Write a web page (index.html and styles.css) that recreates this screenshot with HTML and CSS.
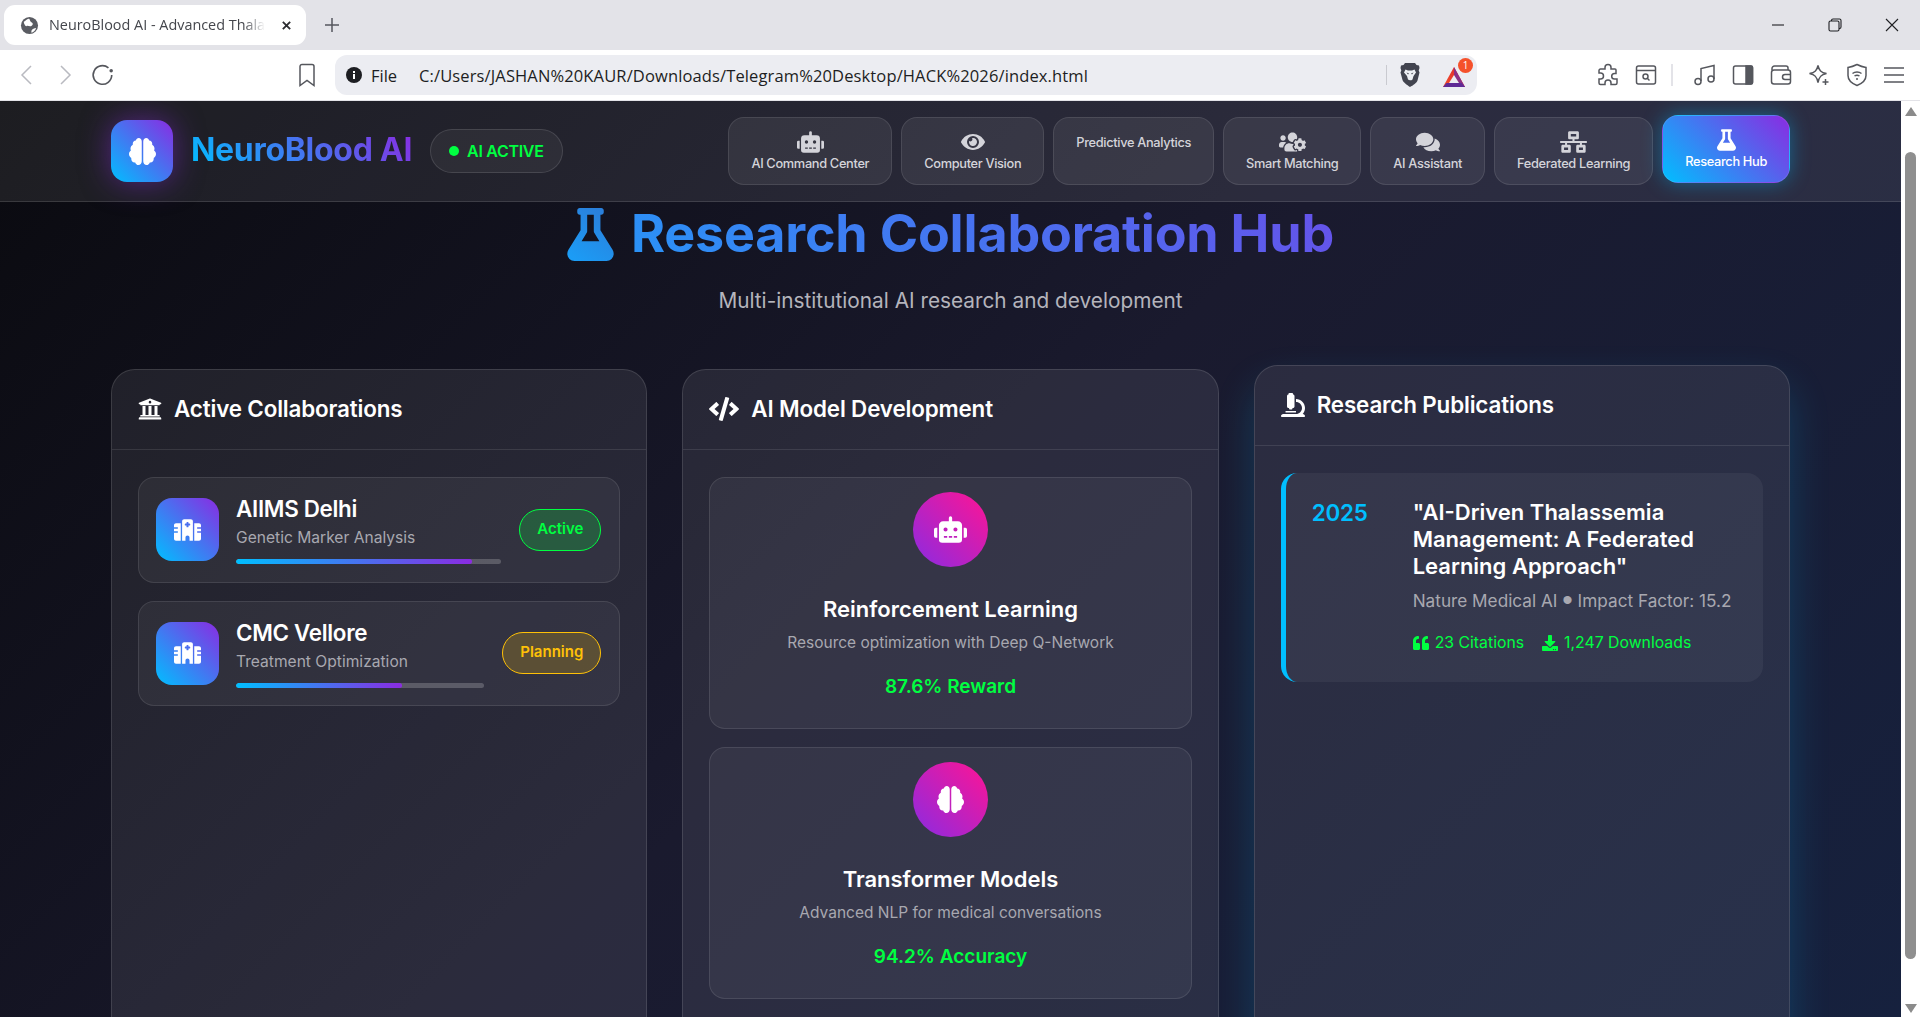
FILE: index.html
```html
<!DOCTYPE html>
<html lang="en">
<head>
    <meta charset="UTF-8">
    <meta name="viewport" content="width=device-width, initial-scale=1.0">
    <title>NeuroBlood AI - Advanced Thalassemia Care</title>
    <link rel="stylesheet" href="styles.css">
</head>

<body>
    <svg class="sprite" xmlns="http://www.w3.org/2000/svg">
        <symbol id="i-brain" viewBox="0 0 576 512" preserveAspectRatio="none"><path d="M208 0c-29.9 0-54.7 20.5-61.8 48.2-.8 0-1.4-.2-2.2-.2-35.3 0-64 28.7-64 64 0 4.8.6 9.5 1.7 14C52.5 138 32 166.6 32 200c0 12.6 3.2 24.3 8.3 34.9C16.3 248.7 0 274.3 0 304c0 33.3 20.4 61.9 49.4 73.9-.9 4.6-1.4 9.3-1.4 14.1 0 39.8 32.2 72 72 72 4.1 0 8.1-.5 12-1.2 9.6 28.5 36.2 49.2 68 49.2 39.8 0 72-32.2 72-72V64c0-35.3-28.7-64-64-64zm368 304c0-29.7-16.3-55.3-40.3-69.1 5.2-10.6 8.3-22.3 8.3-34.9 0-33.4-20.5-62-49.7-74 1-4.5 1.7-9.2 1.7-14 0-35.3-28.7-64-64-64-.8 0-1.5.2-2.2.2C422.7 20.5 397.9 0 368 0c-35.3 0-64 28.6-64 64v376c0 39.8 32.2 72 72 72 31.8 0 58.4-20.7 68-49.2 3.9.7 7.9 1.2 12 1.2 39.8 0 72-32.2 72-72 0-4.8-.5-9.5-1.4-14.1 29-12 49.4-40.6 49.4-73.9z"/></symbol>
        <symbol id="i-robot" viewBox="0 0 640 512"><path d="M32,224H64V416H32A31.96166,31.96166,0,0,1,0,384V256A31.96166,31.96166,0,0,1,32,224Zm512-48V448a64.06328,64.06328,0,0,1-64,64H160a64.06328,64.06328,0,0,1-64-64V176a79.974,79.974,0,0,1,80-80H288V32a32,32,0,0,1,64,0V96H464A79.974,79.974,0,0,1,544,176ZM264,256a40,40,0,1,0-40,40A39.997,39.997,0,0,0,264,256Zm-8,128H192v32h64Zm96,0H288v32h64ZM456,256a40,40,0,1,0-40,40A39.997,39.997,0,0,0,456,256Zm-8,128H384v32h64ZM640,256V384a31.96166,31.96166,0,0,1-32,32H576V224h32A31.96166,31.96166,0,0,1,640,256Z"/></symbol>
        <symbol id="i-eye" viewBox="0 0 576 512"><path d="M572.52 241.4C518.29 135.59 410.93 64 288 64S57.68 135.64 3.48 241.41a32.35 32.35 0 0 0 0 29.19C57.71 376.41 165.07 448 288 448s230.32-71.64 284.52-177.41a32.35 32.35 0 0 0 0-29.19zM288 400a144 144 0 1 1 144-144 143.93 143.93 0 0 1-144 144zm0-240a95.31 95.31 0 0 0-25.31 3.79 47.85 47.85 0 0 1-66.9 66.9A95.78 95.78 0 1 0 288 160z"/></symbol>
        <symbol id="i-users" viewBox="0 0 640 512"><path d="M610.5 341.3c2.6-14.1 2.6-28.5 0-42.6l25.8-14.9c3-1.7 4.3-5.2 3.3-8.5-6.7-21.6-18.2-41.2-33.2-57.4-2.3-2.5-6-3.1-9-1.4l-25.8 14.9c-10.9-9.3-23.4-16.5-36.9-21.3v-29.8c0-3.4-2.4-6.4-5.7-7.1-22.3-5-45-4.8-66.2 0-3.3.7-5.7 3.7-5.7 7.1v29.8c-13.5 4.8-26 12-36.9 21.3l-25.8-14.9c-2.9-1.7-6.7-1.1-9 1.4-15 16.2-26.5 35.8-33.2 57.4-1 3.3.4 6.8 3.3 8.5l25.8 14.9c-2.6 14.1-2.6 28.5 0 42.6l-25.8 14.9c-3 1.7-4.3 5.2-3.3 8.5 6.7 21.6 18.2 41.1 33.2 57.4 2.3 2.5 6 3.1 9 1.4l25.8-14.9c10.9 9.3 23.4 16.5 36.9 21.3v29.8c0 3.4 2.4 6.4 5.7 7.1 22.3 5 45 4.8 66.2 0 3.3-.7 5.7-3.7 5.7-7.1v-29.8c13.5-4.8 26-12 36.9-21.3l25.8 14.9c2.9 1.7 6.7 1.1 9-1.4 15-16.2 26.5-35.8 33.2-57.4 1-3.3-.4-6.8-3.3-8.5l-25.8-14.9zM496 368.5c-26.8 0-48.5-21.8-48.5-48.5s21.8-48.5 48.5-48.5 48.5 21.8 48.5 48.5-21.7 48.5-48.5 48.5zM96 224c35.3 0 64-28.7 64-64s-28.7-64-64-64-64 28.7-64 64 28.7 64 64 64zm224 32c1.9 0 3.7-.5 5.6-.6 8.3-21.7 20.5-42.1 36.3-59.2 7.4-8 17.9-12.6 28.9-12.6 6.9 0 13.7 1.8 19.6 5.3l7.9 4.6c.8-.5 1.6-.9 2.4-1.4 7-14.6 11.2-30.8 11.2-48 0-61.9-50.1-112-112-112S208 82.1 208 144c0 61.9 50.1 112 112 112zm105.2 194.5c-2.3-1.2-4.6-2.6-6.8-3.9-8.2 4.8-15.3 9.8-27.5 9.8-10.9 0-21.4-4.6-28.9-12.6-18.3-19.8-32.3-43.9-40.2-69.6-10.7-34.5 24.9-49.7 25.8-50.3-.1-2.6-.1-5.2 0-7.8l-7.9-4.6c-3.8-2.2-7-5-9.8-8.1-3.3.2-6.5.6-9.8.6-24.6 0-47.6-6-68.5-16h-8.3C179.6 288 128 339.6 128 403.2V432c0 26.5 21.5 48 48 48h255.4c-3.7-6-6.2-12.8-6.2-20.3v-9.2zM173.1 274.6C161.5 263.1 145.6 256 128 256H64c-35.3 0-64 28.7-64 64v32c0 17.7 14.3 32 32 32h65.9c6.3-47.4 34.9-87.3 75.2-109.4z"/></symbol>
        <symbol id="i-comments" viewBox="0 0 576 512"><path d="M416 192c0-88.4-93.1-160-208-160S0 103.6 0 192c0 34.3 14.1 65.9 38 92-13.4 30.2-35.5 54.2-35.8 54.5-2.2 2.3-2.8 5.7-1.5 8.7S4.8 352 8 352c36.6 0 66.9-12.3 88.7-25 32.2 15.7 70.3 25 111.3 25 114.9 0 208-71.6 208-160zm122 220c23.9-26 38-57.7 38-92 0-66.9-53.5-124.2-129.3-148.1.9 6.6 1.3 13.3 1.3 20.1 0 105.9-107.7 192-240 192-10.8 0-21.3-.8-31.7-1.9C207.8 439.6 281.8 480 368 480c41 0 79.1-9.2 111.3-25 21.8 12.7 52.1 25 88.7 25 3.2 0 6.1-1.9 7.3-4.8 1.3-2.9.7-6.3-1.5-8.7-.3-.3-22.4-24.2-35.8-54.5z"/></symbol>
        <symbol id="i-network" viewBox="0 0 640 512"><path d="M640 264v-16c0-8.84-7.16-16-16-16H344v-40h72c17.67 0 32-14.33 32-32V32c0-17.67-14.33-32-32-32H224c-17.67 0-32 14.33-32 32v128c0 17.67 14.33 32 32 32h72v40H16c-8.84 0-16 7.16-16 16v16c0 8.84 7.16 16 16 16h104v40H64c-17.67 0-32 14.33-32 32v128c0 17.67 14.33 32 32 32h160c17.67 0 32-14.33 32-32V352c0-17.67-14.33-32-32-32h-56v-40h304v40h-56c-17.67 0-32 14.33-32 32v128c0 17.67 14.33 32 32 32h160c17.67 0 32-14.33 32-32V352c0-17.67-14.33-32-32-32h-56v-40h104c8.84 0 16-7.16 16-16zM256 128V64h128v64H256zm-64 320H96v-64h96v64zm352 0h-96v-64h96v64z"/></symbol>
        <symbol id="i-flask" viewBox="0 0 448 512"><path d="M437.2 403.5L320 215V64h8c13.3 0 24-10.7 24-24V24c0-13.3-10.7-24-24-24H120c-13.3 0-24 10.7-24 24v16c0 13.3 10.7 24 24 24h8v151L10.8 403.5C-18.5 450.6 15.3 512 70.9 512h306.2c55.7 0 89.4-61.5 60.1-108.5zM137.9 320l48.2-77.6c3.7-5.2 5.8-11.6 5.8-18.4V64h64v160c0 6.9 2.2 13.2 5.8 18.4l48.2 77.6h-172z"/></symbol>
        <symbol id="i-university" viewBox="0 0 512 512"><path fill-rule="evenodd" d="M496 128v16a8 8 0 0 1-8 8h-24v12c0 6.627-5.373 12-12 12H60c-6.627 0-12-5.373-12-12v-12H24a8 8 0 0 1-8-8v-16a8 8 0 0 1 4.941-7.392l232-88a7.996 7.996 0 0 1 6.118 0l232 88A8 8 0 0 1 496 128zM256 82a28 28 0 1 0 0 56 28 28 0 1 0 0-56zm216 350H40c-13.255 0-24 10.745-24 24v16a8 8 0 0 0 8 8h464a8 8 0 0 0 8-8v-16c0-13.255-10.745-24-24-24zM96 192v192H60c-6.627 0-12 5.373-12 12v20h416v-20c0-6.627-5.373-12-12-12h-36V192h-64v192h-64V192h-64v192h-64V192H96z"/></symbol>
        <symbol id="i-code" viewBox="0 0 640 512"><path d="M278.9 511.5l-61-17.7c-6.4-1.8-10-8.5-8.2-14.9L346.2 8.7c1.8-6.4 8.5-10 14.9-8.2l61 17.7c6.4 1.8 10 8.5 8.2 14.9L293.8 503.3c-1.9 6.4-8.5 10.1-14.9 8.2zm-114-112.2l43.5-46.4c4.6-4.9 4.3-12.7-.8-17.2L117 256l90.6-79.7c5.1-4.5 5.5-12.3.8-17.2l-43.5-46.4c-4.5-4.8-12.1-5.1-17-.5L3.8 247.2c-5.1 4.7-5.1 12.8 0 17.5l144.1 135.1c4.9 4.6 12.5 4.4 17-.5zm327.2.6l144.1-135.1c5.1-4.7 5.1-12.8 0-17.5L492.1 112.1c-4.8-4.5-12.4-4.3-17 .5L431.6 159c-4.6 4.9-4.3 12.7.8 17.2L523 256l-90.6 79.7c-5.1 4.5-5.5 12.3-.8 17.2l43.5 46.4c4.5 4.9 12.1 5.1 17 .6z"/></symbol>
        <symbol id="i-microscope" viewBox="0 0 512 512"><path d="M160 320h12v16c0 8.84 7.16 16 16 16h40c8.84 0 16-7.16 16-16v-16h12c17.67 0 32-14.33 32-32V64c0-17.67-14.33-32-32-32V16c0-8.84-7.16-16-16-16h-64c-8.84 0-16 7.16-16 16v16c-17.67 0-32 14.33-32 32v224c0 17.67 14.33 32 32 32zm304 128h-1.29C493.24 413.99 512 369.2 512 320c0-105.88-86.12-192-192-192v64c70.58 0 128 57.42 128 128s-57.42 128-128 128H48c-26.51 0-48 21.49-48 48 0 8.84 7.16 16 16 16h480c8.84 0 16-7.16 16-16 0-26.51-21.49-48-48-48zm-360-32h208c4.42 0 8-3.58 8-8v-16c0-4.42-3.58-8-8-8H104c-4.42 0-8 3.58-8 8v16c0 4.42 3.58 8 8 8z"/></symbol>
        <symbol id="i-hospital" viewBox="0 0 640 512"><path d="M192 48c0-26.5 21.5-48 48-48H400c26.5 0 48 21.5 48 48V512H368V432c0-26.5-21.5-48-48-48s-48 21.5-48 48v80H192V48zM48 96H160V512H48c-26.5 0-48-21.5-48-48V320H80c8.8 0 16-7.2 16-16s-7.2-16-16-16H0V224H80c8.8 0 16-7.2 16-16s-7.2-16-16-16H0V144c0-26.5 21.5-48 48-48zm544 0c26.5 0 48 21.5 48 48v48H560c-8.8 0-16 7.2-16 16s7.2 16 16 16h80v64H560c-8.8 0-16 7.2-16 16s7.2 16 16 16h80V464c0 26.5-21.5 48-48 48H480V96H592zM312 64c-8.8 0-16 7.2-16 16v24H272c-8.8 0-16 7.2-16 16v16c0 8.8 7.2 16 16 16h24v24c0 8.8 7.2 16 16 16h16c8.8 0 16-7.2 16-16V152h24c8.8 0 16-7.2 16-16V120c0-8.8-7.2-16-16-16H344V80c0-8.8-7.2-16-16-16H312z"/></symbol>
        <symbol id="i-quote" viewBox="0 0 512 512"><path d="M464 256h-80v-64c0-35.3 28.7-64 64-64h8c13.3 0 24-10.7 24-24V56c0-13.3-10.7-24-24-24h-8c-88.4 0-160 71.6-160 160v240c0 26.5 21.5 48 48 48h128c26.5 0 48-21.5 48-48V304c0-26.5-21.5-48-48-48zm-288 0H96v-64c0-35.3 28.7-64 64-64h8c13.3 0 24-10.7 24-24V56c0-13.3-10.7-24-24-24h-8C71.6 32 0 103.6 0 192v240c0 26.5 21.5 48 48 48h128c26.5 0 48-21.5 48-48V304c0-26.5-21.5-48-48-48z"/></symbol>
        <symbol id="i-download" viewBox="0 0 512 512"><path d="M216 0h80c13.3 0 24 10.7 24 24v168h87.7c17.8 0 26.7 21.5 14.1 34.1L269.7 378.3c-7.5 7.5-19.8 7.5-27.3 0L90.1 226.1c-12.6-12.6-3.7-34.1 14.1-34.1H192V24c0-13.3 10.7-24 24-24zm296 376v112c0 13.3-10.7 24-24 24H24c-13.3 0-24-10.7-24-24V376c0-13.3 10.7-24 24-24h146.7l49 49c20.1 20.1 52.5 20.1 72.6 0l49-49H488c13.3 0 24 10.7 24 24zm-124 88c0-11-9-20-20-20s-20 9-20 20 9 20 20 20 20-9 20-20zm64 0c0-11-9-20-20-20s-20 9-20 20 9 20 20 20 20-9 20-20z"/></symbol>
        <linearGradient id="flask-fill" x1="0" y1="1" x2="0.6" y2="0">
            <stop offset="0" stop-color="#1a9ff8"/>
            <stop offset="1" stop-color="#2a80dc"/>
        </linearGradient>
    </svg>

    <div class="browser">
        <div class="tabstrip">
            <div class="tab">
                <svg class="tab-globe" viewBox="0 0 20 20">
                    <circle cx="10" cy="10" r="9" fill="#5a5c62"/>
                    <path d="M4 6c2-.5 3-3 5-3 2 0 1 3 3 3.500s2 3 0 4-4-1-5 0-3-2.500-3-4.500zM12 15.500c1-2 3-3 5-3-1 3-3 4.500-5 5z" fill="#fff"/>
                </svg>
                <span class="tab-title">NeuroBlood AI - Advanced Thala</span>
                <svg class="tab-close" viewBox="0 0 12 12"><path d="M2 2l8 8M10 2l-8 8"/></svg>
            </div>
            <svg class="new-tab" viewBox="0 0 14 14"><path d="M7 0v14M0 7h14"/></svg>
            <div class="win-controls">
                <svg class="win-btn" viewBox="0 0 14 14"><path d="M1 7h12"/></svg>
                <svg class="win-btn" viewBox="0 0 14 14"><rect x="1" y="3" width="10" height="10" rx="1.5"/><path d="M3.5 3V2.500A1.500 1.500 0 0 1 5 1h6.500A1.500 1.500 0 0 1 13 2.500V9a1.500 1.500 0 0 1-1.500 1.500H11"/></svg>
                <svg class="win-btn" viewBox="0 0 14 14"><path d="M1 1l12 12M13 1L1 13"/></svg>
            </div>
        </div>

        <div class="toolbar">
            <svg class="tb-icon tb-nav" viewBox="0 0 22 22"><path d="M15 2L6 11l9 9"/></svg>
            <svg class="tb-icon tb-nav" viewBox="0 0 22 22"><path d="M7 2l9 9-9 9"/></svg>
            <svg class="tb-icon tb-reload" viewBox="0 0 22 22"><path d="M19 11a8.500 8.500 0 1 1-3-6.500"/><circle cx="18.500" cy="7" r="1.600" fill="#55575d" stroke="none"/></svg>
            <svg class="tb-icon tb-bookmark" viewBox="0 0 18 24"><path d="M2 3.500A2 2 0 0 1 4 1.500h10a2 2 0 0 1 2 2v19l-7-5-7 5z"/></svg>
            <div class="omnibox">
                <svg class="info-icon" viewBox="0 0 16 16"><circle cx="8" cy="8" r="8" fill="#1d1e22"/><rect x="7" y="7" width="2" height="5" fill="#fff"/><rect x="7" y="4" width="2" height="2" fill="#fff"/></svg>
                <span class="omni-file">File</span>
                <span class="omni-url">C:/Users/JASHAN%20KAUR/Downloads/Telegram%20Desktop/HACK%2026/index.html</span>
                <span class="omni-sep"></span>
                <svg class="brave-lion" viewBox="0 0 20 24">
                    <path d="M5 0h10l1.500 2 2.500.500.500 2.500-.800 2.500.800 2-2 8c-.5 2-4.500 5-7.500 6.500C7 22 3 19 2.500 17L.500 9.500l.800-2L.500 5 1 2.500 3.500 2z" fill="#42444f"/>
                    <path d="M5.500 6.500L8 7.500h4l2.500-1 1.500 3-2.500 3.500-1 3.500-1.500 1h-1L8 16.500 7 13 4 9.500z" fill="#eef0f4"/>
                    <path d="M6.500 9.500l2.500 1-1 1zM13.500 9.500l-2.500 1 1 1zM8.500 17.500h3L10 19.500z" fill="#42444f"/>
                </svg>
                <span class="rewards">
                    <svg viewBox="0 0 24 22">
                        <defs>
                            <linearGradient id="rewards-left" x1="0" y1="1" x2="1" y2="0">
                                <stop offset="0" stop-color="#f5502a"/>
                                <stop offset="1" stop-color="#d9252f"/>
                            </linearGradient>
                        </defs>
                        <path d="M12 1L1 21h22z" fill="url(#rewards-left)"/>
                        <path d="M12 1l11 20h-7l-4-9z" fill="#8a2f86"/>
                        <path d="M1 21l3.500-4h15l3.500 4z" fill="#5f2a95"/>
                        <path d="M12 9l5 8H7z" fill="#ecedf2"/>
                    </svg>
                    <span class="rewards-badge">1</span>
                </span>
            </div>
            <div class="tb-right">
                <svg class="tb-icon tb-ext" viewBox="0 0 24 24"><path d="M9 4.500a3 3 0 0 1 6 0V6h4a1 1 0 0 1 1 1v3.500h-1.500a2.800 2.800 0 0 0 0 5.600H21V20a1.500 1.500 0 0 1-1.500 1.500H15V20a3 3 0 0 0-6 0v1.500H4.500A1.500 1.500 0 0 1 3 20v-4h1.500a3 3 0 0 0 0-6H3V7.500A1.500 1.500 0 0 1 4.500 6H9z"/></svg>
                <svg class="tb-icon tb-ext" viewBox="0 0 24 24"><rect x="2.500" y="3" width="19" height="18" rx="2"/><path d="M2.500 7.500h19"/><circle cx="11.500" cy="13.500" r="2.500"/><path d="M13.500 15.500l2 2"/></svg>
                <span class="tb-divider"></span>
                <svg class="tb-icon tb-ext" viewBox="0 0 24 24"><path d="M8 18V5.500L21 2.500V16"/><circle cx="5" cy="18.500" r="3"/><circle cx="18" cy="16" r="3"/></svg>
                <svg class="tb-icon tb-ext" viewBox="0 0 24 24"><rect x="2.500" y="3" width="19" height="18" rx="2"/><path d="M15 3h5a1.500 1.500 0 0 1 1.500 1.500v15A1.500 1.500 0 0 1 20 21h-5z" fill="#55575d"/></svg>
                <svg class="tb-icon tb-ext" viewBox="0 0 24 24"><path d="M3 7V5.500A2.500 2.500 0 0 1 5.500 3H17a2 2 0 0 1 2 2v2"/><rect x="2.500" y="7" width="19" height="14" rx="2.500"/><path d="M21.500 11.500H16a2.500 2.500 0 0 0 0 5h5.500"/></svg>
                <svg class="tb-icon tb-ext" viewBox="0 0 24 24"><path d="M11 2.500c1 5 3 7 8.500 8-5.500 1-7.500 3.500-8.500 9-1-5.500-3-8-8.500-9 5.500-1 7.500-3 8.500-8z"/><path d="M18.500 16v6M15.500 19h6"/></svg>
                <svg class="tb-icon tb-ext" viewBox="0 0 24 24"><path d="M12 1.500c3 1.500 6 2.500 9 3v8c0 4.500-4 8-9 10-5-2-9-5.500-9-10v-8c3-.5 6-1.500 9-3z"/><path d="M7.500 10.500c2.500-2 6.500-2 9 0M9.500 13c1.500-1 3.500-1 5 0"/><circle cx="12" cy="16" r="1" fill="#55575d" stroke="none"/></svg>
                <svg class="tb-icon tb-menu" viewBox="0 0 22 18"><path d="M1 2h20M1 9h20M1 16h20"/></svg>
            </div>
        </div>

        <div class="viewport">
            <div class="page">
                <header class="topbar">
                    <div class="brand">
                        <div class="brand-logo"><svg class="brain-svg"><use href="#i-brain"/></svg></div>
                        <span class="brand-name">NeuroBlood AI</span>
                        <div class="ai-status"><span class="ai-dot"></span>AI ACTIVE</div>
                    </div>
                    <nav class="nav">
                        <a class="nav-btn"><svg class="nav-icon nav-icon-wide"><use href="#i-robot"/></svg>AI Command Center</a>
                        <a class="nav-btn"><svg class="nav-icon nav-icon-eye"><use href="#i-eye"/></svg>Computer Vision</a>
                        <a class="nav-btn nav-btn-noicon">Predictive Analytics</a>
                        <a class="nav-btn"><svg class="nav-icon nav-icon-wide"><use href="#i-users"/></svg>Smart Matching</a>
                        <a class="nav-btn"><svg class="nav-icon nav-icon-eye"><use href="#i-comments"/></svg>AI Assistant</a>
                        <a class="nav-btn"><svg class="nav-icon nav-icon-wide"><use href="#i-network"/></svg>Federated Learning</a>
                        <a class="nav-btn nav-btn-active"><svg class="nav-icon nav-icon-flask"><use href="#i-flask"/></svg>Research Hub</a>
                    </nav>
                </header>

                <main class="content">
                    <div class="hero">
                        <h1 class="hero-title">
                            <svg class="hero-flask"><use href="#i-flask" fill="url(#flask-fill)"/></svg>
                            <span>Research Collaboration Hub</span>
                        </h1>
                        <p class="hero-sub">Multi-institutional AI research and development</p>
                    </div>

                    <div class="columns">
                        <section class="panel">
                            <div class="panel-head">
                                <svg class="head-icon head-uni"><use href="#i-university"/></svg>
                                <h3>Active Collaborations</h3>
                            </div>
                            <div class="panel-body">
                                <div class="collab">
                                    <div class="collab-icon"><svg class="hospital-svg"><use href="#i-hospital"/></svg></div>
                                    <div class="collab-info">
                                        <h4>AIIMS Delhi</h4>
                                        <p>Genetic Marker Analysis</p>
                                        <div class="progress"><div class="progress-fill" style="width: 89%"></div></div>
                                    </div>
                                    <span class="badge badge-active">Active</span>
                                </div>
                                <div class="collab">
                                    <div class="collab-icon"><svg class="hospital-svg"><use href="#i-hospital"/></svg></div>
                                    <div class="collab-info">
                                        <h4>CMC Vellore</h4>
                                        <p>Treatment Optimization</p>
                                        <div class="progress"><div class="progress-fill" style="width: 67%"></div></div>
                                    </div>
                                    <span class="badge badge-planning">Planning</span>
                                </div>
                            </div>
                        </section>

                        <section class="panel">
                            <div class="panel-head">
                                <svg class="head-icon head-code"><use href="#i-code"/></svg>
                                <h3>AI Model Development</h3>
                            </div>
                            <div class="panel-body">
                                <div class="model">
                                    <div class="model-icon"><svg class="model-robot"><use href="#i-robot"/></svg></div>
                                    <h4>Reinforcement Learning</h4>
                                    <p>Resource optimization with Deep Q-Network</p>
                                    <div class="model-metric">87.6% Reward</div>
                                </div>
                                <div class="model">
                                    <div class="model-icon"><svg class="brain-svg"><use href="#i-brain"/></svg></div>
                                    <h4>Transformer Models</h4>
                                    <p>Advanced NLP for medical conversations</p>
                                    <div class="model-metric">94.2% Accuracy</div>
                                </div>
                            </div>
                        </section>

                        <section class="panel panel-hover">
                            <div class="panel-head">
                                <svg class="head-icon head-uni"><use href="#i-microscope"/></svg>
                                <h3>Research Publications</h3>
                            </div>
                            <div class="panel-body">
                                <div class="pub">
                                    <div class="pub-year">2025</div>
                                    <div class="pub-info">
                                        <h4>"AI-Driven Thalassemia Management: A Federated Learning Approach"</h4>
                                        <p>Nature Medical AI <span class="pub-dot">•</span> Impact Factor: 15.2</p>
                                        <div class="pub-stats">
                                            <span class="pub-stat"><svg class="stat-icon"><use href="#i-quote"/></svg>23 Citations</span>
                                            <span class="pub-stat"><svg class="stat-icon"><use href="#i-download"/></svg>1,247 Downloads</span>
                                        </div>
                                    </div>
                                </div>
                            </div>
                        </section>
                    </div>
                </main>
            </div>

            <div class="scrollbar">
                <span class="sb-arrow sb-up"></span>
                <div class="sb-thumb"></div>
                <span class="sb-arrow sb-down"></span>
            </div>
        </div>
    </div>
</body>
</html>
```

FILE: styles.css
```css
* {
    box-sizing: border-box;
    margin: 0;
    padding: 0;
}

html, body {
    height: 100%;
    overflow: hidden;
}

body {
    font-family: "Inter", "Liberation Sans", sans-serif;
    background: #e3e3e8;
}

.sprite {
    width: 0;
    height: 0;
    position: absolute;
}

.browser {
    height: 100vh;
    display: flex;
    flex-direction: column;
}

/* browser chrome */
.tabstrip {
    height: 50px;
    flex: none;
    display: flex;
    align-items: center;
    padding-left: 4px;
    background: #e3e3e8;
}

.tab {
    width: 302px;
    height: 40px;
    display: flex;
    align-items: center;
    padding: 0 14px 0 16px;
    background: #fff;
    border-radius: 11px;
}

.tab-globe {
    width: 19px;
    height: 19px;
    flex: none;
    margin-right: 10px;
}

.tab-title {
    width: 216px;
    flex: none;
    white-space: nowrap;
    font-family: "Open Sans", "Noto Sans", sans-serif;
    font-size: 14.400px;
    line-height: 18px;
    margin-top: -1px;
    color: #44464c;
    -webkit-mask-image: linear-gradient(90deg, #000 90%, transparent 100%);
    mask-image: linear-gradient(90deg, #000 90%, transparent 100%);
}

.tab-close {
    width: 11px;
    height: 11px;
    margin-left: 16px;
    fill: none;
    stroke: #2c2d31;
    stroke-width: 2;
}

.new-tab {
    width: 14px;
    height: 14px;
    margin-left: 19px;
    fill: none;
    stroke: #55575d;
    stroke-width: 1.500;
}

.win-controls {
    margin-left: auto;
    display: flex;
    gap: 43px;
    padding-right: 21px;
}

.win-btn {
    width: 14px;
    height: 14px;
    fill: none;
    stroke: #1f2023;
    stroke-width: 1.100;
}

.toolbar {
    height: 51px;
    flex: none;
    display: flex;
    align-items: center;
    background: #fff;
    border-bottom: 1px solid #e3e3e8;
}

.tb-icon {
    fill: none;
    stroke: #55575d;
    stroke-width: 1.500;
    flex: none;
}

.tb-nav {
    width: 22px;
    height: 22px;
    margin-left: 16px;
    stroke: #b9bac0;
}

.tb-reload {
    width: 24px;
    height: 24px;
    margin-left: 15px;
}

.tb-bookmark {
    width: 18px;
    height: 24px;
    margin-left: 183px;
}

.omnibox {
    width: 1142px;
    height: 40px;
    margin-left: 19px;
    display: flex;
    align-items: center;
    padding-left: 11px;
    background: #ecedf2;
    border-radius: 12px;
    color: #1d1e22;
    font-family: "Open Sans", "Noto Sans", sans-serif;
    font-size: 16.500px;
}

.info-icon {
    width: 16px;
    height: 16px;
    flex: none;
}

.omni-file {
    margin-left: 9px;
    width: 48px;
}

.omni-url {
    width: 967px;
    white-space: nowrap;
    letter-spacing: 0.130px;
}

.omni-sep {
    width: 1px;
    height: 20px;
    background: #c9cad0;
}

.brave-lion {
    width: 20px;
    height: 24px;
    margin-left: 13px;
}

.rewards {
    position: relative;
    width: 24px;
    height: 22px;
    margin-left: 22px;
}

.rewards svg {
    width: 24px;
    height: 22px;
    display: block;
    transform: translateY(2px);
}

.rewards-badge {
    position: absolute;
    top: -6px;
    right: -7px;
    width: 15px;
    height: 15px;
    border-radius: 50%;
    background: #f5512b;
    color: #fff;
    font-size: 10px;
    line-height: 15px;
    text-align: center;
}

.tb-right {
    display: flex;
    align-items: center;
    margin-left: 119px;
}

.tb-ext {
    width: 24px;
    height: 24px;
    margin-right: 14px;
}

.tb-divider {
    width: 2px;
    height: 22px;
    margin: 0 20px 0 -1px;
    background: #e3e3e8;
}

.tb-menu {
    width: 22px;
    height: 18px;
}

/* page */
.viewport {
    flex: 1;
    min-height: 0;
    display: flex;
}

.page {
    width: 1901px;
    flex: none;
    overflow: hidden;
    color: #fff;
    background: linear-gradient(135deg, #0a0a0f 0%, #1a1a2e 50%, #16213e 100%);
}

.scrollbar {
    flex: 1;
    display: flex;
    flex-direction: column;
    align-items: center;
    padding: 6px 0 4px;
    background: #fff;
}

.sb-arrow {
    width: 0;
    height: 0;
    border-left: 6px solid transparent;
    border-right: 6px solid transparent;
}

.sb-up {
    border-bottom: 9px solid #8b8b8b;
}

.sb-down {
    margin-top: auto;
    border-top: 9px solid #8b8b8b;
}

.sb-thumb {
    width: 11px;
    height: 807px;
    margin-top: 36px;
    background: #8f8f8f;
    border-radius: 6px;
}

.topbar {
    height: 101px;
    display: flex;
    align-items: center;
    justify-content: space-between;
    padding: 0 111px;
    background: rgba(255, 255, 255, 0.08);
    border-bottom: 1px solid rgba(255, 255, 255, 0.12);
}

.brand {
    display: flex;
    align-items: center;
}

.brand-logo {
    width: 62px;
    height: 62px;
    display: flex;
    align-items: center;
    justify-content: center;
    border-radius: 16px;
    background: linear-gradient(45deg, #00bfff, #8a2be2);
    box-shadow: 0 0 30px rgba(138, 43, 226, 0.5);
}

.brain-svg {
    width: 27px;
    height: 27px;
    fill: #fff;
}

.brand-name {
    margin: -3px 0 0 18px;
    font-size: 32px;
    font-weight: 700;
    letter-spacing: -0.300px;
    background: linear-gradient(45deg, #00bfff, #8a2be2);
    -webkit-background-clip: text;
    background-clip: text;
    color: transparent;
}

.ai-status {
    display: flex;
    align-items: center;
    gap: 8px;
    height: 44px;
    margin-left: 18px;
    padding: 0 18px;
    border-radius: 22px;
    background: rgba(255, 255, 255, 0.05);
    border: 1px solid rgba(255, 255, 255, 0.12);
    color: #00ff41;
    font-size: 16px;
    font-weight: 600;
    letter-spacing: -0.300px;
}

.ai-dot {
    width: 10px;
    height: 10px;
    border-radius: 50%;
    background: #00ff41;
}

.nav {
    display: flex;
    gap: 9px;
    align-items: center;
}

.nav-btn {
    height: 68px;
    padding: 13px 22px 0;
    display: flex;
    flex-direction: column;
    align-items: center;
    gap: 3px;
    border-radius: 16px;
    background: rgba(255, 255, 255, 0.07);
    border: 1px solid rgba(255, 255, 255, 0.1);
    color: #d4d4da;
    font-size: 12.800px;
    font-weight: 500;
    letter-spacing: -0.330px;
    line-height: 16px;
    white-space: nowrap;
}

.nav-btn-noicon {
    padding-top: 17px;
}

.nav-btn-active {
    transform: translateY(-2px);
    color: #fff;
    background: linear-gradient(45deg, #00bfff, #8a2be2);
    box-shadow: 0 0 20px rgba(0, 191, 255, 0.4);
}

.nav-icon {
    height: 22px;
    fill: #d4d4da;
}

.nav-icon-wide {
    width: 27px;
}

.nav-icon-eye {
    width: 24px;
}

.nav-icon-flask {
    width: 19px;
    fill: #fff;
}

.content {
    padding: 0 111px;
}

.hero {
    text-align: center;
    height: 167px;
    padding-top: 4px;
}

.hero-title {
    display: flex;
    align-items: center;
    justify-content: center;
    gap: 17px;
    font-size: 52px;
    font-weight: 700;
    letter-spacing: -0.200px;
    line-height: 56px;
    background: linear-gradient(45deg, #00bfff, #8a2be2);
    -webkit-background-clip: text;
    background-clip: text;
    color: transparent;
}

.hero-flask {
    width: 47px;
    height: 53px;
    flex: none;
}

.hero-sub {
    margin-top: 26px;
    font-size: 20.800px;
    color: #b4b4bc;
}

.columns {
    display: grid;
    grid-template-columns: repeat(3, 1fr);
    gap: 35px;
}

.panel {
    min-height: 720px;
    border-radius: 24px;
    background: rgba(255, 255, 255, 0.08);
    border: 1px solid rgba(255, 255, 255, 0.12);
}

.panel-hover {
    transform: translateY(-4px);
    box-shadow: 0 20px 40px rgba(0, 191, 255, 0.2);
}

.panel-head {
    height: 80px;
    display: flex;
    align-items: center;
    gap: 12px;
    padding: 0 26px 2px;
    border-bottom: 1px solid rgba(255, 255, 255, 0.1);
}

.panel-head h3 {
    font-size: 22.400px;
    font-weight: 600;
    letter-spacing: -0.150px;
}

.head-icon {
    height: 24px;
    fill: #fff;
    flex: none;
}

.head-uni {
    width: 24px;
}

.head-code {
    width: 30px;
}

.panel-body {
    padding: 27px 26px;
    display: flex;
    flex-direction: column;
    gap: 18px;
}

.collab {
    height: 105.500px;
    display: flex;
    align-items: center;
    padding: 0 18px 0 17px;
    border-radius: 16px;
    background: rgba(255, 255, 255, 0.05);
    border: 1px solid rgba(255, 255, 255, 0.1);
}

.collab-icon {
    width: 63px;
    height: 63px;
    flex: none;
    display: flex;
    align-items: center;
    justify-content: center;
    border-radius: 16px;
    background: linear-gradient(45deg, #00bfff, #8a2be2);
}

.hospital-svg {
    width: 27px;
    height: 22px;
    fill: #fff;
}

.collab-info {
    flex: 1;
    margin: 0 18px 0 17px;
}

.collab-info h4 {
    font-size: 22.400px;
    font-weight: 600;
    letter-spacing: -0.300px;
    line-height: 27px;
}

.collab-info p {
    margin-top: 6px;
    font-size: 15.600px;
    line-height: 20px;
    color: #a8a8b0;
}

.progress {
    height: 5px;
    margin-top: 11px;
    border-radius: 3px;
    background: rgba(255, 255, 255, 0.2);
    overflow: hidden;
}

.progress-fill {
    height: 100%;
    border-radius: 3px;
    background: linear-gradient(90deg, #00bfff, #8a2be2);
}

.badge {
    height: 42px;
    flex: none;
    display: flex;
    align-items: center;
    padding: 0 17px 3px;
    border-radius: 21px;
    font-size: 15px;
    font-weight: 600;
}

.badge-active {
    color: #00ff41;
    background: rgba(0, 255, 65, 0.2);
    border: 1px solid #00ff41;
}

.badge-planning {
    color: #ffc107;
    background: rgba(255, 193, 7, 0.2);
    border: 1px solid #ffc107;
}

.model {
    height: 252px;
    flex: none;
    padding-top: 14px;
    text-align: center;
    border-radius: 16px;
    background: rgba(255, 255, 255, 0.05);
    border: 1px solid rgba(255, 255, 255, 0.1);
}

.model-icon {
    width: 75px;
    height: 75px;
    margin: 0 auto;
    display: flex;
    align-items: center;
    justify-content: center;
    border-radius: 50%;
    background: linear-gradient(45deg, #8a2be2, #ff1493);
}

.model-robot {
    width: 33px;
    height: 27px;
    fill: #fff;
}

.model h4 {
    margin-top: 29px;
    font-size: 22px;
    font-weight: 600;
    line-height: 26px;
}

.model p {
    margin-top: 12px;
    font-size: 15.500px;
    line-height: 18px;
    color: #a8a8b0;
}

.model-metric {
    margin-top: 24px;
    font-size: 19px;
    font-weight: 600;
    line-height: 22px;
    color: #00ff41;
}

.pub {
    height: 209px;
    display: flex;
    padding: 26px 20px 0 26px;
    border-radius: 16px;
    background: rgba(255, 255, 255, 0.05);
    border-left: 5px solid #00bfff;
}

.pub-year {
    width: 101px;
    flex: none;
    font-size: 22.400px;
    font-weight: 600;
    letter-spacing: -0.200px;
    line-height: 27px;
    color: #00bfff;
}

.pub-info h4 {
    font-size: 22px;
    font-weight: 600;
    line-height: 27px;
}

.pub-info p {
    margin-top: 11px;
    font-size: 17.200px;
    line-height: 20px;
    white-space: nowrap;
    color: #a8a8b0;
}

.pub-dot {
    font-family: "Liberation Sans", sans-serif;
    font-size: 30px;
    line-height: 0;
    vertical-align: -3px;
}

.pub-stats {
    display: flex;
    gap: 18px;
    margin-top: 22px;
}

.pub-stat {
    display: flex;
    align-items: center;
    gap: 6px;
    font-size: 15.800px;
    line-height: 20px;
    color: #00ff41;
}

.stat-icon {
    width: 16px;
    height: 16px;
    fill: #00ff41;
}
```
